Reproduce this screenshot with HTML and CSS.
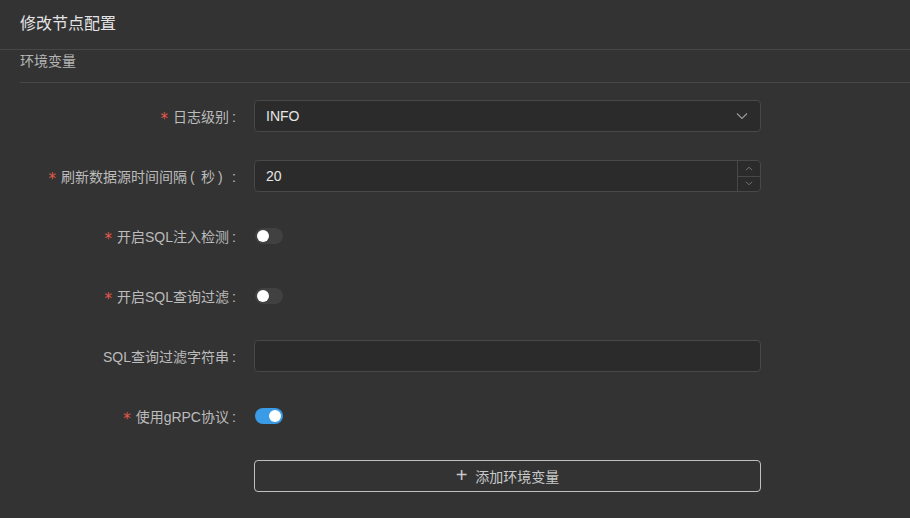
FILE: index.html
```html
<!DOCTYPE html>
<html lang="zh">
<head>
<meta charset="utf-8">
<link rel="stylesheet" href="styles.css">
</head>
<body>
<div class="modal">
  <div class="header">修改节点配置</div>
  <div class="body">
    <div class="section">环境变量</div>
    <div class="form">
      <div class="row">
        <label class="label"><span class="req">*</span>日志级别<span class="fw">:</span></label>
        <div class="control">
          <div class="select">
            <span>INFO</span>
            <svg class="arrow" width="12" height="8" viewBox="0 0 12 8"><path d="M1 1.5 L6 6.5 L11 1.5" fill="none" stroke="#9a9a9a" stroke-width="1.2"/></svg>
          </div>
        </div>
      </div>
      <div class="row">
        <label class="label"><span class="req">*</span>刷新数据源时间间隔<span class="fw">(</span>秒<span class="fw">)</span><span class="fw">:</span></label>
        <div class="control">
          <div class="input number">
            <span class="val">20</span>
            <div class="steps">
              <div class="step"><svg width="8" height="5" viewBox="0 0 8 5"><path d="M1 4.2 L4 1.2 L7 4.2" fill="none" stroke="#7a7a7a" stroke-width="1"/></svg></div>
              <div class="step"><svg width="8" height="5" viewBox="0 0 8 5"><path d="M1 0.8 L4 3.8 L7 0.8" fill="none" stroke="#7a7a7a" stroke-width="1"/></svg></div>
            </div>
          </div>
        </div>
      </div>
      <div class="row">
        <label class="label"><span class="req">*</span>开启SQL注入检测<span class="fw">:</span></label>
        <div class="control"><span class="switch"><span class="knob"></span></span></div>
      </div>
      <div class="row">
        <label class="label"><span class="req">*</span>开启SQL查询过滤<span class="fw">:</span></label>
        <div class="control"><span class="switch"><span class="knob"></span></span></div>
      </div>
      <div class="row">
        <label class="label">SQL查询过滤字符串<span class="fw">:</span></label>
        <div class="control"><div class="input"></div></div>
      </div>
      <div class="row">
        <label class="label"><span class="req">*</span>使用gRPC协议<span class="fw">:</span></label>
        <div class="control"><span class="switch on"><span class="knob"></span></span></div>
      </div>
      <div class="row">
        <div class="label"></div>
        <div class="control">
          <div class="btn"><span class="plus">+</span>添加环境变量</div>
        </div>
      </div>
    </div>
  </div>
</div>
</body>
</html>
```

FILE: styles.css
```css
html, body {
  margin: 0;
  padding: 0;
  background: #333333;
  font-family: "Liberation Sans", "Noto Sans CJK SC", sans-serif;
}
.modal {
  width: 910px;
  height: 518px;
  background: #333333;
  overflow: hidden;
}
.header {
  height: 49px;
  padding-left: 20px;
  line-height: 47px;
  font-size: 16px;
  color: #e4e4e4;
  border-bottom: 1px solid #474747;
}
.body {
  padding-left: 20px;
}
.section {
  height: 32px;
  line-height: 22px;
  font-size: 14px;
  color: #b4b4b4;
  border-bottom: 1px solid #474747;
}
.form {
  padding-top: 17px;
}
.row {
  display: flex;
  align-items: center;
  height: 32px;
  margin-bottom: 28px;
}
.label {
  width: 223px;
  flex: none;
  text-align: right;
  font-size: 14px;
  color: #bcbcbc;
  white-space: nowrap;
}
.fw {
  display: inline-block;
  box-sizing: border-box;
  width: 14px;
  padding-left: 3px;
  text-align: left;
}
.req {
  color: #e5594b;
  margin-right: 5px;
  position: relative;
  top: 2px;
  font-size: 15px;
  font-family: "DejaVu Sans", sans-serif;
}
.control {
  margin-left: 11px;
  width: 507px;
  display: flex;
  align-items: center;
}
.select, .input {
  box-sizing: border-box;
  width: 507px;
  height: 32px;
  background: #2b2b2b;
  border: 1px solid #484848;
  border-radius: 4px;
  display: flex;
  align-items: center;
  font-size: 14px;
  color: #e6e6e6;
}
.select {
  justify-content: space-between;
  padding: 0 12px 0 11px;
}
.input .val {
  padding-left: 11px;
  flex: 1;
}
.steps {
  width: 22px;
  height: 30px;
  border-left: 1px solid #484848;
  display: flex;
  flex-direction: column;
}
.step {
  flex: 1;
  display: flex;
  align-items: center;
  justify-content: center;
}
.step + .step {
  border-top: 1px solid #484848;
}
.switch {
  position: relative;
  display: inline-block;
  width: 28px;
  height: 16px;
  border-radius: 8px;
  background: #414141;
  margin-left: 1px;
}
.switch .knob {
  position: absolute;
  top: 2px;
  left: 2px;
  width: 12px;
  height: 12px;
  border-radius: 50%;
  background: #ffffff;
}
.switch.on {
  background: #3a9be6;
}
.switch.on .knob {
  left: 14px;
}
.btn {
  box-sizing: border-box;
  width: 507px;
  height: 32px;
  border: 1px solid #bfbfbf;
  border-radius: 4px;
  display: flex;
  align-items: center;
  justify-content: center;
  font-size: 14px;
  color: #c8c8c8;
}
.plus {
  font-size: 20px;
  font-weight: 300;
  margin-right: 8px;
  line-height: 1;
  position: relative;
  top: -1px;
}
```
